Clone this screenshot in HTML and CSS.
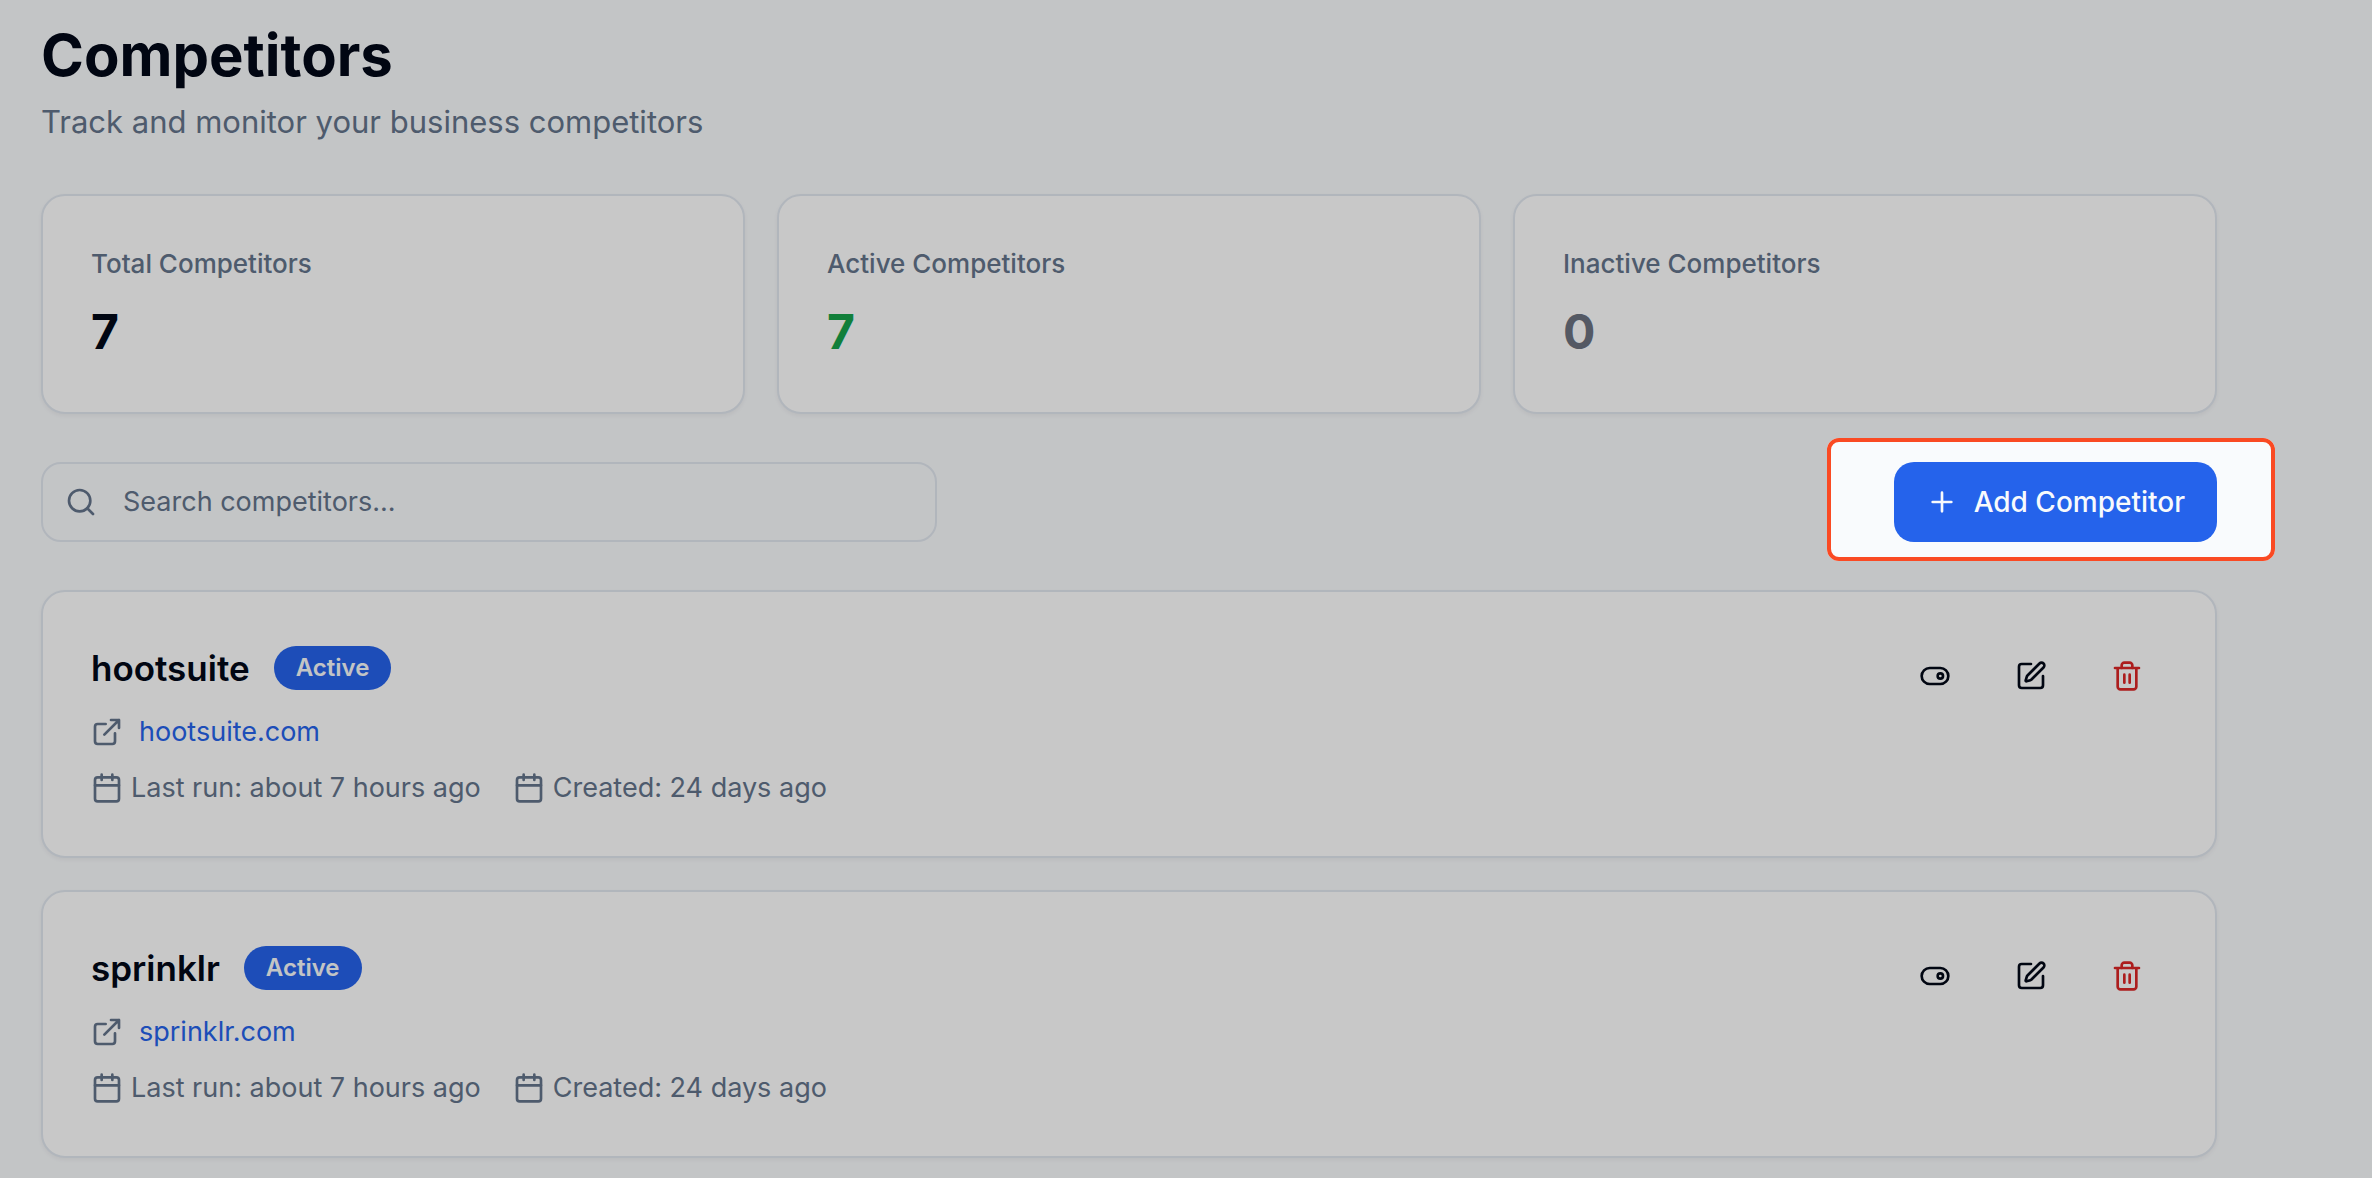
FILE: index.html
```html
<!DOCTYPE html>
<html lang="en">
<head>
    <meta charset="UTF-8">
    <meta name="viewport" content="width=device-width, initial-scale=1.0">
    <title>Competitors</title>
    <link rel="stylesheet" href="styles.css">
</head>
<body>
    <!-- Shared icons -->
    <svg class="sprite" aria-hidden="true">
        <symbol id="icon-search" viewBox="0 0 24 24">
            <circle cx="11" cy="11" r="8" />
            <path d="m21 21-4.3-4.3" />
        </symbol>
        <symbol id="icon-plus" viewBox="0 0 24 24">
            <path d="M5 12h14M12 5v14" />
        </symbol>
        <symbol id="icon-link" viewBox="0 0 24 24">
            <path d="M15 3h6v6M10 14 21 3" />
            <path d="M18 13v6a2 2 0 0 1-2 2H5a2 2 0 0 1-2-2V8a2 2 0 0 1 2-2h6" />
        </symbol>
        <symbol id="icon-calendar" viewBox="0 0 24 24">
            <path d="M8 2v4M16 2v4M3 10h18" />
            <rect x="3" y="4" width="18" height="18" rx="2" />
        </symbol>
        <symbol id="icon-toggle" viewBox="0 0 24 24">
            <rect x="2" y="6" width="20" height="12" rx="6" />
            <circle cx="16" cy="12" r="2" />
        </symbol>
        <symbol id="icon-edit" viewBox="0 0 24 24">
            <path d="M12 3H5a2 2 0 0 0-2 2v14a2 2 0 0 0 2 2h14a2 2 0 0 0 2-2v-7" />
            <path d="M18.375 2.625a2.121 2.121 0 0 1 3 3l-9.013 9.014a2 2 0 0 1-.853.505l-2.873.84a.5.5 0 0 1-.62-.62l.84-2.873a2 2 0 0 1 .506-.852z" />
        </symbol>
        <symbol id="icon-trash" viewBox="0 0 24 24">
            <path d="M3 6h18M19 6v14c0 1-1 2-2 2H7c-1 0-2-1-2-2V6" />
            <path d="M8 6V4c0-1 1-2 2-2h4c1 0 2 1 2 2v2M10 11v6M14 11v6" />
        </symbol>
    </svg>

    <main class="page">
        <header class="page-header">
            <h1>Competitors</h1>
            <p>Track and monitor your business competitors</p>
        </header>

        <!-- Summary cards -->
        <section class="stats">
            <div class="card">
                <p class="stat-label">Total Competitors</p>
                <p class="stat-value">7</p>
            </div>
            <div class="card">
                <p class="stat-label">Active Competitors</p>
                <p class="stat-value green">7</p>
            </div>
            <div class="card">
                <p class="stat-label">Inactive Competitors</p>
                <p class="stat-value gray">0</p>
            </div>
        </section>

        <!-- Search and add -->
        <div class="toolbar">
            <label class="search">
                <svg class="icon"><use href="#icon-search" /></svg>
                <input type="text" placeholder="Search competitors..." aria-label="Search competitors">
            </label>
            <div class="add-wrap">
                <button class="add-button" type="button">
                    <svg class="icon"><use href="#icon-plus" /></svg>
                    Add Competitor
                </button>
                <div class="spotlight"></div>
            </div>
        </div>

        <!-- Competitor list -->
        <section class="list">
            <article class="card competitor">
                <div class="info">
                    <div class="name-row">
                        <h2>hootsuite</h2>
                        <span class="badge">Active</span>
                    </div>
                    <div class="link-row">
                        <svg class="icon"><use href="#icon-link" /></svg>
                        <a href="#">hootsuite.com</a>
                    </div>
                    <div class="meta-row">
                        <span class="meta"><svg class="icon"><use href="#icon-calendar" /></svg>Last run: about 7 hours ago</span>
                        <span class="meta"><svg class="icon"><use href="#icon-calendar" /></svg>Created: 24 days ago</span>
                    </div>
                </div>
                <div class="actions">
                    <button type="button" aria-label="Toggle"><svg class="icon"><use href="#icon-toggle" /></svg></button>
                    <button type="button" aria-label="Edit"><svg class="icon"><use href="#icon-edit" /></svg></button>
                    <button type="button" aria-label="Delete" class="delete"><svg class="icon"><use href="#icon-trash" /></svg></button>
                </div>
            </article>

            <article class="card competitor">
                <div class="info">
                    <div class="name-row">
                        <h2>sprinklr</h2>
                        <span class="badge">Active</span>
                    </div>
                    <div class="link-row">
                        <svg class="icon"><use href="#icon-link" /></svg>
                        <a href="#">sprinklr.com</a>
                    </div>
                    <div class="meta-row">
                        <span class="meta"><svg class="icon"><use href="#icon-calendar" /></svg>Last run: about 7 hours ago</span>
                        <span class="meta"><svg class="icon"><use href="#icon-calendar" /></svg>Created: 24 days ago</span>
                    </div>
                </div>
                <div class="actions">
                    <button type="button" aria-label="Toggle"><svg class="icon"><use href="#icon-toggle" /></svg></button>
                    <button type="button" aria-label="Edit"><svg class="icon"><use href="#icon-edit" /></svg></button>
                    <button type="button" aria-label="Delete" class="delete"><svg class="icon"><use href="#icon-trash" /></svg></button>
                </div>
            </article>
        </section>
    </main>
</body>
</html>
```

FILE: styles.css
```css
/* General */
* {
    box-sizing: border-box;
}

body {
    margin: 0;
    overflow: hidden;
    background-color: #f9fbfd;
    color: #020817;
    font-family: Inter, "Liberation Sans", sans-serif;
    font-size: 27px;
    line-height: 40px;
}

h1, h2, p {
    margin: 0;
}

button, input {
    font: inherit;
    color: inherit;
}

.sprite {
    display: none;
}

.icon {
    width: 32px;
    height: 32px;
    flex-shrink: 0;
    fill: none;
    stroke: currentColor;
    stroke-width: 2;
    stroke-linecap: round;
    stroke-linejoin: round;
}

.page {
    padding: 18px 155px 20px 41px;
    display: flex;
    flex-direction: column;
    gap: 48px;
}

/* Header */
.page-header h1 {
    font-size: 58px;
    line-height: 74px;
    font-weight: 700;
}

.page-header p {
    margin-top: 6px;
    font-size: 31px;
    line-height: 48px;
    color: #64748b;
}

/* Cards */
.card {
    padding: 48px;
    background-color: #fff;
    border: 2px solid #e2e8f0;
    border-radius: 24px;
    box-shadow: 0 2px 4px rgba(0, 0, 0, 0.05);
}

.stats {
    display: grid;
    grid-template-columns: repeat(3, 1fr);
    gap: 32px;
}

.stat-label {
    font-size: 26px;
    font-weight: 500;
    color: #64748b;
}

.stat-value {
    margin-top: 16px;
    font-size: 48px;
    line-height: 64px;
    font-weight: 700;
}

.green {
    color: #16a34a;
}

.gray {
    color: #6b7280;
}

/* Toolbar */
.toolbar {
    display: flex;
    justify-content: space-between;
    align-items: center;
}

.search {
    display: flex;
    align-items: center;
    gap: 26px;
    width: 100%;
    max-width: 896px;
    height: 80px;
    padding: 0 22px;
    border: 2px solid #e2e8f0;
    border-radius: 20px;
    color: #64748b;
}

.search input {
    flex: 1;
    padding: 0;
    border: none;
    outline: none;
    background: transparent;
}

.search input::placeholder {
    color: #64748b;
    opacity: 1;
}

.add-wrap {
    position: relative;
}

.add-button {
    display: flex;
    align-items: center;
    gap: 16px;
    height: 80px;
    padding: 0 32px;
    border: none;
    border-radius: 20px;
    background-color: #2563eb;
    color: #f8fafc;
    font-size: 28px;
    font-weight: 500;
    cursor: pointer;
}

/* Highlight frame, the shadow dims everything around it */
.spotlight {
    position: absolute;
    top: -24px;
    right: -58px;
    bottom: -19px;
    left: -67px;
    border: 4px solid #fa4a23;
    border-radius: 12px;
    box-shadow: 0 0 0 3000px rgba(0, 0, 0, 0.216);
    pointer-events: none;
    z-index: 10;
}

/* Competitor list */
.list {
    display: flex;
    flex-direction: column;
    gap: 32px;
}

.competitor {
    display: flex;
    justify-content: space-between;
    align-items: flex-start;
}

.info {
    display: flex;
    flex-direction: column;
    gap: 16px;
}

.name-row {
    display: flex;
    align-items: center;
    gap: 24px;
}

.name-row h2 {
    font-size: 35px;
    line-height: 56px;
    font-weight: 600;
}

.badge {
    padding: 6px 22px;
    border-radius: 22px;
    background-color: #2563eb;
    color: #f8fafc;
    font-size: 24px;
    line-height: 32px;
    font-weight: 600;
}

.link-row {
    display: flex;
    align-items: center;
    gap: 16px;
    color: #64748b;
}

.link-row a {
    color: #2563eb;
    text-decoration: none;
}

.link-row a:hover {
    text-decoration: underline;
}

.meta-row {
    display: flex;
    gap: 32px;
    color: #64748b;
}

.meta {
    display: flex;
    align-items: center;
    gap: 8px;
}

.actions {
    display: flex;
    gap: 16px;
}

.actions button {
    display: flex;
    align-items: center;
    justify-content: center;
    width: 80px;
    height: 72px;
    padding: 0;
    border: none;
    border-radius: 16px;
    background: none;
    cursor: pointer;
}

.actions .delete {
    color: #dc2626;
}
```
